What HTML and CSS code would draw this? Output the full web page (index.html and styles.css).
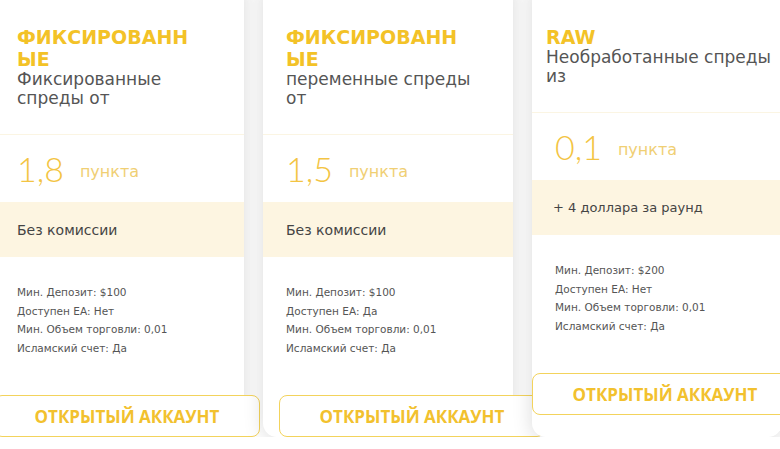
FILE: index.html
```html
<!DOCTYPE html>
<html lang="ru">
<head>
  <meta charset="UTF-8" />
  <meta name="viewport" content="width=device-width, initial-scale=1.0" />
  <title>Типы счетов</title>
  <link rel="stylesheet" href="styles.css">
</head>
<body>
  <div class="plans">
    <div class="plan">
      <div class="plan-head">
        <h3 class="plan-name">ФИКСИРОВАННЫЕ</h3>
        <p class="plan-desc">Фиксированные спреды от</p>
      </div>
      <div class="plan-price"><span class="price-value">1,8</span><span class="price-unit">пункта</span></div>
      <div class="plan-fee">Без комиссии</div>
      <ul class="plan-info">
        <li>Мин. Депозит: $100</li>
        <li>Доступен EA: Нет</li>
        <li>Мин. Объем торговли: 0,01</li>
        <li>Исламский счет: Да</li>
      </ul>
      <a href="#" class="plan-btn">ОТКРЫТЫЙ АККАУНТ</a>
    </div>

    <div class="plan">
      <div class="plan-head">
        <h3 class="plan-name">ФИКСИРОВАННЫЕ</h3>
        <p class="plan-desc">переменные спреды от</p>
      </div>
      <div class="plan-price"><span class="price-value">1,5</span><span class="price-unit">пункта</span></div>
      <div class="plan-fee">Без комиссии</div>
      <ul class="plan-info">
        <li>Мин. Депозит: $100</li>
        <li>Доступен EA: Да</li>
        <li>Мин. Объем торговли: 0,01</li>
        <li>Исламский счет: Да</li>
      </ul>
      <a href="#" class="plan-btn plan-btn-shift">ОТКРЫТЫЙ АККАУНТ</a>
    </div>

    <div class="plan plan-raw">
      <div class="plan-head">
        <h3 class="plan-name">RAW</h3>
        <p class="plan-desc">Необработанные спреды из</p>
      </div>
      <div class="plan-price"><span class="price-value">0,1</span><span class="price-unit">пункта</span></div>
      <div class="plan-fee">+ 4 доллара за раунд</div>
      <ul class="plan-info">
        <li>Мин. Депозит: $200</li>
        <li>Доступен EA: Нет</li>
        <li>Мин. Объем торговли: 0,01</li>
        <li>Исламский счет: Да</li>
      </ul>
      <a href="#" class="plan-btn">ОТКРЫТЫЙ АККАУНТ</a>
    </div>
  </div>
</body>
</html>
```

FILE: styles.css
```css
html, body {
  margin: 0;
  padding: 0;
  background: #fff;
  overflow: hidden;
  font-family: "DejaVu Sans", sans-serif;
  color: #444;
}
.plans {
  display: flex;
  gap: 19px;
  margin: -20px 0 0 -6px;
}
.plan {
  flex: 0 0 250px;
  min-width: 0;
  height: 457px;
  background: #fff;
  border-radius: 14px;
  box-shadow: 0 2px 20px rgba(0,0,0,0.15);
  display: flex;
  flex-direction: column;
}
.plan-head {
  padding: 46px 23px 26px;
}
.plan-raw .plan-head {
  padding-left: 14px;
  padding-right: 0;
}
.plan-name {
  margin: 0;
  width: 183px;
  font-size: 19px;
  line-height: 22px;
  font-weight: bold;
  color: #f3c227;
  word-break: break-all;
}
.plan-desc {
  margin: 0;
  width: 195px;
  font-size: 17px;
  line-height: 19px;
  color: #555;
}
.plan-raw .plan-desc {
  width: 232px;
}
.plan-price {
  height: 67px;
  border-top: 1px solid #fbf5e3;
  padding: 0 23px;
  display: flex;
  align-items: center;
}
.price-value {
  font-family: Lato, sans-serif;
  font-weight: 300;
  font-size: 34px;
  color: #f3c443;
}
.price-unit {
  margin: 6px 0 0 16px;
  font-size: 16px;
  color: #f0cf74;
}
.plan-fee {
  height: 55px;
  padding: 0 23px;
  background: #fdf5e1;
  display: flex;
  align-items: center;
  font-size: 14px;
  color: #444;
}
.plan-raw .plan-fee {
  padding-left: 21px;
  font-size: 13px;
}
.plan-info {
  list-style: none;
  margin: 0;
  padding: 26px 23px 0;
  font-size: 10.5px;
  line-height: 18.5px;
  color: #555;
}
.plan-btn {
  margin-top: 38px;
  width: 266px;
  height: 42px;
  box-sizing: border-box;
  flex: 0 0 auto;
  border: 1px solid #f3d35c;
  border-radius: 8px;
  background: #fff;
  display: flex;
  align-items: center;
  justify-content: center;
  font-family: "Open Sans", sans-serif;
  font-weight: 700;
  font-size: 17px;
  color: #f2c12e;
  text-decoration: none;
}
.plan-btn-shift {
  margin-left: 16px;
}
```
